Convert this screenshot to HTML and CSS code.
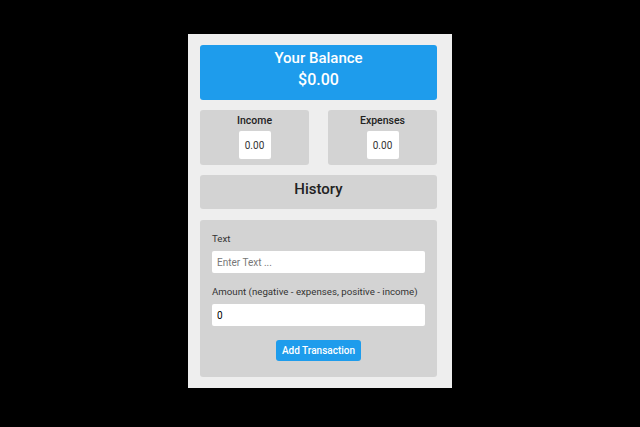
FILE: index.html
```html
<!DOCTYPE html>
<html>
<head>
<meta charset="utf-8">
<link rel="stylesheet" href="styles.css">
</head>
<body>
<div class="app">
  <div class="balance">
    <div class="balance-title">Your Balance</div>
    <div class="balance-amount">$0.00</div>
  </div>
  <div class="summary">
    <div class="card">
      <div class="card-title">Income</div>
      <div class="card-value">0.00</div>
    </div>
    <div class="card">
      <div class="card-title">Expenses</div>
      <div class="card-value">0.00</div>
    </div>
  </div>
  <div class="history">History</div>
  <div class="form">
    <label class="label">Text</label>
    <input class="input" type="text" placeholder="Enter Text ...">
    <label class="label label-second">Amount (negative - expenses, positive - income)</label>
    <input class="input" type="text" value="0">
    <div class="actions"><button class="btn">Add Transaction</button></div>
  </div>
</div>
</body>
</html>
```

FILE: styles.css
```css
html, body {
  margin: 0;
  padding: 0;
  background: #000;
  width: 640px;
  height: 427px;
  overflow: hidden;
  font-family: Roboto, "Liberation Sans", sans-serif;
}
body {
  display: flex;
  justify-content: center;
  align-items: flex-start;
}
.app {
  margin: 34px 0 0 0;
  width: 237px;
  padding: 11px 15px 11px 12px;
  background: #eeeeee;
  display: flex;
  flex-direction: column;
  gap: 10px;
}
.balance {
  background: #1e9cec;
  color: #fff;
  border-radius: 3px;
  height: 55px;
  display: flex;
  flex-direction: column;
  align-items: center;
  justify-content: center;
  font-weight: 500;
  padding-bottom: 7px;
  box-sizing: border-box;
}
.balance-title {
  font-size: 15px;
  line-height: 22px;
}
.balance-amount {
  font-size: 16px;
  line-height: 22px;
}
.summary {
  display: flex;
  justify-content: space-between;
}
.card {
  width: 109px;
  height: 55px;
  background: #d3d3d3;
  border-radius: 3px;
  display: flex;
  flex-direction: column;
  align-items: center;
  box-sizing: border-box;
  padding-top: 5px;
}
.card-title {
  font-size: 10.5px;
  font-weight: 500;
  color: #222;
  line-height: 12px;
}
.card-value {
  margin-top: 4px;
  width: 32px;
  height: 28px;
  background: #fff;
  border-radius: 2px;
  font-size: 10px;
  color: #333;
  display: flex;
  align-items: center;
  justify-content: center;
}
.history {
  background: #d3d3d3;
  border-radius: 3px;
  height: 34px;
  display: flex;
  justify-content: center;
  align-items: center;
  font-size: 15px;
  font-weight: 500;
  color: #222;
  padding-bottom: 6px;
  box-sizing: border-box;
}
.form {
  background: #d3d3d3;
  border-radius: 3px;
  padding: 12px 12px 16px 12px;
  display: flex;
  flex-direction: column;
  margin-top: 1px;
}
.label {
  font-size: 9.7px;
  color: #333;
  line-height: 14px;
  margin-bottom: 5px;
}
.label-second {
  margin-top: 12px;
  margin-bottom: 5px;
}
.input {
  border: none;
  border-radius: 2px;
  height: 22px;
  padding: 0 5px;
  font-family: Roboto, "Liberation Sans", sans-serif;
  font-size: 10px;
  color: #000;
  background: #fff;
  box-sizing: border-box;
  width: 100%;
  outline: none;
}
.input::placeholder {
  color: #777;
}
.actions {
  display: flex;
  justify-content: center;
  margin-top: 14px;
}
.btn {
  background: #1e9cec;
  color: #fff;
  border: none;
  border-radius: 3px;
  font-family: Roboto, "Liberation Sans", sans-serif;
  font-size: 10px;
  font-weight: 500;
  height: 21px;
  padding: 0 6px;
  cursor: pointer;
}
```
